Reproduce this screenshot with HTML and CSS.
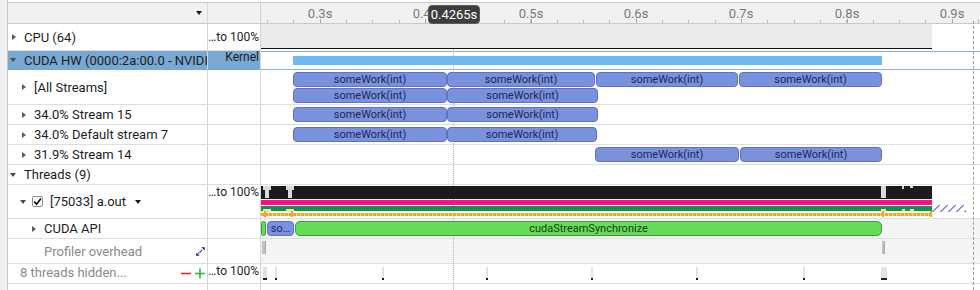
FILE: index.html
```html
<!DOCTYPE html>
<html>
<head>
    <title>Timeline View</title>
    <link rel="stylesheet" href="styles.css">
</head>
<body>
<div class="app">
    <div class="gutter"></div>
    <div class="view">
        <div class="row header">
            <div class="name"><span class="caret menu-caret"></span></div>
            <div class="scale"></div>
            <div class="track ruler">
                <span class="tick-label" style="left:59px">0.3s</span>
                <span class="tick-label" style="left:164px">0.4s</span>
                <span class="tick-label" style="left:270px">0.5s</span>
                <span class="tick-label" style="left:375px">0.6s</span>
                <span class="tick-label" style="left:480px">0.7s</span>
                <span class="tick-label" style="left:586px">0.8s</span>
                <span class="tick-label" style="left:691px">0.9s</span>
                <span class="cursor-tip" style="left:167px">0.4265s</span>
            </div>
        </div>

        <div class="row r-cpu">
            <div class="name"><span class="toggle"><i class="tri closed"></i></span>CPU (64)</div>
            <div class="scale middle">…to 100%</div>
            <div class="track no-line">
                <div class="cpu-band" style="width:671px"></div>
            </div>
        </div>

        <div class="row r-hw selected">
            <div class="name"><span class="toggle"><i class="tri open"></i></span><span class="clip">CUDA HW (0000:2a:00.0 - NVIDIA)</span></div>
            <div class="scale">Kernel</div>
            <div class="track">
                <div class="kernel" style="left:32px;width:589px"></div>
            </div>
        </div>

        <div class="row r-streams">
            <div class="name lvl1"><span class="toggle"><i class="tri closed"></i></span>[All Streams]</div>
            <div class="scale"></div>
            <div class="track">
                <div class="bar" style="left:32px;width:154px">someWork(int)</div>
                <div class="bar" style="left:186px;width:148px">someWork(int)</div>
                <div class="bar" style="left:335px;width:142px">someWork(int)</div>
                <div class="bar" style="left:478px;width:143px">someWork(int)</div>
                <div class="bar lane2" style="left:32px;width:154px">someWork(int)</div>
                <div class="bar lane2" style="left:186px;width:151px">someWork(int)</div>
            </div>
        </div>

        <div class="row r-line">
            <div class="name lvl1"><span class="toggle"><i class="tri closed"></i></span>34.0% Stream 15</div>
            <div class="scale"></div>
            <div class="track">
                <div class="bar" style="left:32px;width:154px">someWork(int)</div>
                <div class="bar" style="left:186px;width:151px">someWork(int)</div>
            </div>
        </div>

        <div class="row r-line">
            <div class="name lvl1"><span class="toggle"><i class="tri closed"></i></span>34.0% Default stream 7</div>
            <div class="scale"></div>
            <div class="track">
                <div class="bar" style="left:32px;width:154px">someWork(int)</div>
                <div class="bar" style="left:186px;width:150px">someWork(int)</div>
            </div>
        </div>

        <div class="row r-line">
            <div class="name lvl1"><span class="toggle"><i class="tri closed"></i></span>31.9% Stream 14</div>
            <div class="scale"></div>
            <div class="track">
                <div class="bar" style="left:334px;width:144px">someWork(int)</div>
                <div class="bar" style="left:479px;width:142px">someWork(int)</div>
            </div>
        </div>

        <div class="row r-line">
            <div class="name"><span class="toggle"><i class="tri open"></i></span>Threads (9)</div>
            <div class="scale"></div>
            <div class="track"></div>
        </div>

        <div class="row r-proc">
            <div class="name lvl1">
                <span class="toggle narrow"><i class="tri open"></i></span>
                <span class="check"><svg width="9" height="9" viewBox="0 0 9 9"><path d="M1.2 4.6 L3.6 7.2 L7.9 1.4" fill="none" stroke="#111" stroke-width="1.6"/></svg></span>
                [75033] a.out <span class="caret proc-caret"></span>
            </div>
            <div class="scale">…to 100%</div>
            <div class="track">
                <div class="band black" style="width:671px"></div>
                <div class="notch" style="left:2px;width:8px;height:4px"></div>
                <div class="notch" style="left:4px;width:4px"></div>
                <div class="notch" style="left:25px;width:8px;height:4px"></div>
                <div class="notch" style="left:27px;width:4px"></div>
                <div class="notch" style="left:620px;width:5px"></div>
                <div class="notch" style="left:641px;width:2px;height:3px"></div>
                <div class="notch" style="left:649px;width:3px;height:2px"></div>
                <div class="band pink" style="width:671px"></div>
                <div class="band green" style="width:671px"></div>
                <div class="peach" style="left:2px"></div>
                <div class="peach" style="left:25px"></div>
                <div class="peach" style="left:620px;width:5px"></div>
                <div class="peach" style="left:641px;width:3px"></div>
                <div class="peach" style="left:649px;width:4px"></div>
                <div class="band orange" style="width:671px"></div>
                <div class="otick" style="left:3px"></div>
                <div class="otick" style="left:30px"></div>
                <div class="otick" style="left:621px"></div>
                <div class="otick" style="left:669px"></div>
                <div class="hatch" style="left:671px;width:34px"></div>
            </div>
        </div>

        <div class="row r-line">
            <div class="name lvl2"><span class="toggle"><i class="tri closed"></i></span>CUDA API</div>
            <div class="scale"></div>
            <div class="track shaded">
                <div class="api green-api" style="left:0;width:5px"></div>
                <div class="bar api-short" style="left:6px;width:27px">so…</div>
                <div class="api green-api" style="left:34px;width:587px">cudaStreamSynchronize</div>
            </div>
        </div>

        <div class="row r-overhead">
            <div class="name lvl2 muted">
                <span class="toggle"></span>Profiler overhead
                <svg class="resize-icon" width="9" height="9" viewBox="0 0 9 9">
                    <path d="M2.4 6.6 L6.6 2.4" stroke="#1a1a80" stroke-width="1.4" stroke-dasharray="1.2 0.8"/>
                    <path d="M0.2 5.4 L0.2 8.8 L3.6 8.8 Z M8.8 3.6 L8.8 0.2 L5.4 0.2 Z" fill="#1a1a80"/>
                </svg>
            </div>
            <div class="scale"></div>
            <div class="track shaded">
                <div class="ovh" style="left:1px;width:4px"></div>
                <div class="ovh" style="left:621px;width:3px"></div>
            </div>
        </div>

        <div class="row r-line">
            <div class="name lvl1 muted hidden-row">
                8 threads hidden...
                <span class="zoom-btns">
                    <svg width="24" height="11" viewBox="0 0 24 11">
                        <path d="M0 5.5 H10" stroke="#e3262b" stroke-width="1.6"/>
                        <path d="M14 5.5 H24 M19 0.5 V10.5" stroke="#39b042" stroke-width="1.6"/>
                    </svg>
                </span>
            </div>
            <div class="scale">…to 100%</div>
            <div class="track">
                <div class="sample" style="left:2px;width:4px"></div>
                <div class="sample" style="left:14px;width:2px"></div>
                <div class="sample" style="left:121px;width:2px"></div>
                <div class="sample" style="left:225px;width:2px"></div>
                <div class="sample" style="left:330px;width:2px"></div>
                <div class="sample" style="left:435px;width:2px"></div>
                <div class="sample" style="left:542px;width:2px"></div>
                <div class="sample" style="left:620px;width:6px"></div>
            </div>
        </div>

        <div class="row r-empty">
            <div class="name"></div>
            <div class="scale"></div>
            <div class="track"></div>
        </div>

        <div class="cursor-line"></div>
        <div class="end-line"></div>
    </div>
</div>
</body>
</html>
```

FILE: styles.css
```css
* {
    box-sizing: border-box;
}
body {
    margin: 0;
    font-family: Roboto, "Liberation Sans", sans-serif;
    font-size: 13px;
    color: #1e1e1e;
    background: #fff;
}
.app {
    display: flex;
    height: 290px;
    overflow: hidden;
}
.gutter {
    width: 8px;
    flex: none;
    background: #f0f0f0;
    border-right: 1px solid #c9c9c9;
}
.view {
    flex: 1;
    position: relative;
    padding-top: 2px;
}
.row {
    display: grid;
    grid-template-columns: 200px 53px 1fr;
}
.row > div {
    border-bottom: 1px solid #dedede;
}
.name {
    display: flex;
    align-items: center;
    padding-left: 2px;
    white-space: nowrap;
    overflow: hidden;
    border-right: 1px solid #d6d6d6;
}
.name .clip {
    overflow: hidden;
    min-width: 0;
}
.name.lvl1 {
    padding-left: 12px;
}
.name.lvl2 {
    padding-left: 22px;
}
.name.muted {
    color: #8a8a8a;
}
.scale {
    border-right: 1px solid #d6d6d6;
    font-size: 12px;
    line-height: 15px;
    text-align: right;
    padding-right: 1px;
    white-space: nowrap;
    overflow: hidden;
}
.scale.middle {
    line-height: 26px;
}
.track {
    position: relative;
}
.track.no-line {
    border-bottom-color: transparent !important;
}
.track.shaded {
    background: #f5f5f5;
}

/* header / ruler */
.header {
    height: 22px;
    border-top: 1px solid #c9c9c9;
}
.header > div {
    background-color: #f1f1f1;
    border-bottom-color: #c9c9c9;
}
.header .scale {
    border-right-color: #d0d0d0;
}
.header .ruler {
    background-image:
        repeating-linear-gradient(to right, #a5a5a5 0 1px, transparent 1px 105.33px),
        repeating-linear-gradient(to right, #bcbcbc 0 1px, transparent 1px 26.33px);
    background-size: 100% 4px, 100% 3px;
    background-position: 59px 100%, 6px 100%;
    background-repeat: no-repeat;
}
.tick-label {
    position: absolute;
    top: 3px;
    transform: translateX(-50%);
    color: #7a7a7a;
    font-size: 13px;
    line-height: 16px;
}
.cursor-tip {
    position: absolute;
    top: 2px;
    width: 52px;
    height: 19px;
    background: #3d3d3d;
    border: 1px solid #5a5a5a;
    border-radius: 4px;
    color: #fff;
    font-size: 13px;
    line-height: 17px;
    text-align: center;
    z-index: 3;
}
.caret {
    width: 0;
    height: 0;
    border-left: 3px solid transparent;
    border-right: 3px solid transparent;
    border-top: 4px solid #1a1a1a;
}
.menu-caret {
    margin-left: auto;
    margin-right: 5px;
}
.proc-caret {
    margin-left: 9px;
    margin-top: 1px;
}

/* tree toggles */
.toggle {
    width: 14px;
    flex: none;
    display: flex;
    align-items: center;
}
.toggle.narrow {
    width: 12px;
}
.tri {
    display: block;
    width: 0;
    height: 0;
}
.tri.closed {
    margin-left: 2px;
    border-top: 3.5px solid transparent;
    border-bottom: 3.5px solid transparent;
    border-left: 4px solid #5a5a5a;
}
.tri.open {
    border-left: 3.5px solid transparent;
    border-right: 3.5px solid transparent;
    border-top: 4px solid #4a4a4a;
}
.check {
    width: 11px;
    height: 11px;
    flex: none;
    margin-right: 7px;
    border: 1px solid #8c8c8c;
    border-radius: 2px;
    background: #fff;
    display: flex;
    align-items: center;
    justify-content: center;
}
.resize-icon {
    margin-left: auto;
    margin-right: 2px;
}
.zoom-btns {
    margin-left: auto;
    margin-right: 2px;
    display: flex;
}
.hidden-row {
    align-items: flex-start;
    padding-top: 1px;
}
.hidden-row .zoom-btns {
    margin-top: 3px;
}

/* row heights */
.r-cpu { height: 27px; }
.r-hw { height: 19px; }
.r-streams { height: 35px; }
.r-line { height: 20px; }
.r-proc { height: 34px; }
.r-overhead { height: 25px; }
.r-empty { height: 20px; }

.r-hw .name,
.r-hw .scale {
    background: #78a8d4;
    border-bottom-color: #78a8d4;
}
.r-hw .scale {
    line-height: 13px;
}
.r-hw .track {
    box-shadow: inset 0 1px #85b1db;
    border-bottom-color: #85b1db;
}

/* timeline items */
.cpu-band {
    position: absolute;
    left: 0;
    top: 0;
    height: 25px;
    background: #ebebeb;
    border-bottom: 1px solid #111;
    z-index: 2;
}
.kernel {
    position: absolute;
    top: 5px;
    height: 9px;
    background: #6fbaf0;
    z-index: 2;
}
.bar {
    position: absolute;
    top: 2px;
    height: 15px;
    background: #7a92dd;
    border: 1px solid #5d72c2;
    border-radius: 4px;
    color: #1c2858;
    font-size: 11px;
    line-height: 13px;
    text-align: center;
    white-space: nowrap;
    overflow: hidden;
    z-index: 2;
}
.bar.lane2 {
    top: 18px;
}
.bar.api-short {
    font-size: 11px;
}
.api {
    position: absolute;
    top: 2px;
    height: 15px;
    border-radius: 5px;
    font-size: 11px;
    line-height: 13px;
    text-align: center;
    white-space: nowrap;
    overflow: hidden;
    z-index: 2;
}
.green-api {
    background: #64de57;
    border: 1px solid #3f9a37;
    color: #1f3a1c;
}
.band {
    position: absolute;
    left: 0;
    z-index: 2;
}
.band.black {
    top: 1px;
    height: 13px;
    background: #1b1b1b;
}
.band.pink {
    top: 15px;
    height: 5px;
    background: #ff0e8c;
}
.band.green {
    top: 21px;
    height: 5px;
    background: #17904a;
}
.band.orange {
    top: 28px;
    height: 3px;
    background: repeating-linear-gradient(to right, #f5a623 0 3px, #fbd38a 3px 4px);
}
.notch {
    position: absolute;
    top: 1px;
    height: 12px;
    background: #dadada;
    z-index: 3;
}
.peach {
    position: absolute;
    top: 24px;
    width: 8px;
    height: 3px;
    background: #f8dcb2;
    z-index: 3;
}
.otick {
    position: absolute;
    top: 26px;
    width: 2px;
    height: 6px;
    background: #f5a623;
    z-index: 3;
}
.hatch {
    position: absolute;
    top: 20px;
    height: 7px;
    background: repeating-linear-gradient(135deg, transparent 0 4.6px, #7d8ad6 4.6px 5.7px);
    z-index: 2;
}
.ovh {
    position: absolute;
    top: 2px;
    height: 13px;
    background: #c2c2c2;
    border-right: 1px solid #a8a8a8;
    z-index: 2;
}
.sample {
    position: absolute;
    top: 3px;
    height: 13px;
    background: #e3e3e3;
    border-bottom: 2px solid #1e1e1e;
    z-index: 2;
}
.cursor-line {
    position: absolute;
    left: 445px;
    top: 23px;
    bottom: 0;
    border-left: 1px dotted #b3b3b3;
    z-index: 1;
}
.end-line {
    position: absolute;
    left: 965px;
    top: 21px;
    bottom: 0;
    border-left: 1px dashed #9c9c9c;
    z-index: 1;
}
```
